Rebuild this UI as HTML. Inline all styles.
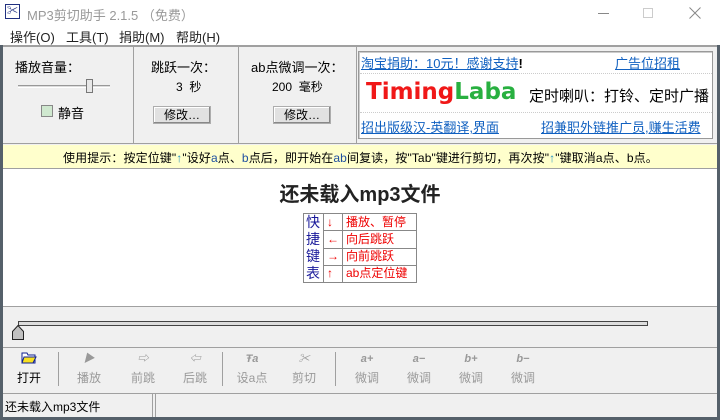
<!DOCTYPE html>
<html><head><meta charset="utf-8"><style>
*{margin:0;padding:0;box-sizing:border-box}
body{width:720px;height:420px;overflow:hidden;background:#f0f0f0;position:relative;font-family:"Liberation Sans","Noto Sans CJK SC",sans-serif;font-size:12px;color:#000}
.a{position:absolute}
.btn{position:absolute;width:58px;height:18px;background:#e1e1e1;border:1px solid #adadad;box-shadow:inset -1px -1px 0 #888,inset 1px 1px 0 #fff;text-align:center;line-height:16px;font-size:12px}
.lnk{color:#1060c0;text-decoration:underline}
.tb{position:absolute;top:352px;width:50px;margin-left:-25px;text-align:center;color:#9a9a9a;font-size:12px}
.tb .i{height:17px;font-size:11px;font-style:italic;font-weight:bold;color:#999;line-height:15px}
.vs{position:absolute;top:352px;width:1px;height:34px;background:#a0a0a0}
td{border:1px solid #888;padding:0 3px;height:17px;color:#e00;font-size:12px;line-height:15px}
.m{position:absolute;top:27px;font-size:13px;color:#222}
</style></head><body>
<div class="a" style="left:0;top:0;width:720px;height:45px;background:#fff"></div>
<div class="a" style="left:5px;top:4px;width:15px;height:15px;border:1px solid #203080;font-size:11px;line-height:13px;text-align:center;color:#203080">✂</div>
<div class="a" style="left:27px;top:5px;color:#999;font-size:13px">MP3剪切助手 2.1.5 （免费）</div>
<div class="a" style="left:598px;top:13px;width:11px;height:1px;background:#888"></div>
<div class="a" style="left:643px;top:8px;width:10px;height:10px;border:1px solid #ccc"></div>
<svg class="a" style="left:689px;top:7px" width="12" height="12"><path d="M0.5 0.5L11.5 11.5M11.5 0.5L0.5 11.5" stroke="#888" stroke-width="1"/></svg>
<div class="m" style="left:10px">操作(O)</div>
<div class="m" style="left:66px">工具(T)</div>
<div class="m" style="left:119px">捐助(M)</div>
<div class="m" style="left:176px">帮助(H)</div>
<div class="a" style="left:0;top:45px;width:3px;height:375px;background:#55606a"></div>
<div class="a" style="left:717px;top:45px;width:3px;height:375px;background:#55606a"></div>
<div class="a" style="left:0;top:417px;width:720px;height:3px;background:#55606a"></div>
<div class="a" style="left:3px;top:45px;width:714px;height:2px;background:#a0a0a0"></div>
<div class="a" style="left:133px;top:47px;width:1px;height:96px;background:#a0a0a0"></div>
<div class="a" style="left:238px;top:47px;width:1px;height:96px;background:#a0a0a0"></div>
<div class="a" style="left:356px;top:47px;width:1px;height:96px;background:#a0a0a0"></div>
<div class="a" style="left:15px;top:57px;font-size:13px">播放音量：</div>
<div class="a" style="left:18px;top:85px;width:92px;height:3px;border-top:1px solid #999;border-bottom:1px solid #fff;background:#ddd"></div>
<div class="a" style="left:86px;top:79px;width:7px;height:14px;background:#e8e8e8;border:1px solid #777"></div>
<div class="a" style="left:41px;top:105px;width:12px;height:12px;border:1px solid #888;background:#cfe8cf"></div>
<div class="a" style="left:58px;top:103px;font-size:13px">静音</div>
<div class="a" style="left:151px;top:57px;font-size:13px">跳跃一次：</div>
<div class="a" style="left:176px;top:78px;font-size:12px">3&nbsp;&nbsp;秒</div>
<div class="btn" style="left:153px;top:106px">修改…</div>
<div class="a" style="left:251px;top:57px;font-size:13px">ab点微调一次：</div>
<div class="a" style="left:272px;top:78px;font-size:12px">200&nbsp;&nbsp;毫秒</div>
<div class="btn" style="left:273px;top:106px">修改…</div>
<div class="a" style="left:358px;top:51px;width:355px;height:88px;background:#fff;border:1px solid #999;box-shadow:inset 1px 1px 0 #ccc"></div>
<div class="a" style="left:361px;top:53px;font-size:13px"><span class="lnk">淘宝捐助：10元！感谢支持</span><b>!</b></div>
<div class="a lnk" style="left:615px;top:53px;font-size:13px">广告位招租</div>
<div class="a" style="left:360px;top:73px;width:352px;border-top:1px dotted #ccc"></div>
<div class="a" style="left:366px;top:79px;font-size:23px;font-weight:bold;font-family:'DejaVu Sans',sans-serif"><span style="color:#f01818">Timing</span><span style="color:#28b040">Laba</span></div>
<div class="a" style="left:529px;top:85px;font-size:15px;white-space:nowrap">定时喇叭：打铃、定时广播</div>
<div class="a" style="left:360px;top:112px;width:352px;border-top:1px dotted #ccc"></div>
<div class="a lnk" style="left:361px;top:117px;font-size:13px">招出版级汉-英翻译,界面</div>
<div class="a lnk" style="left:541px;top:117px;font-size:13px">招兼职外链推广员,赚生活费</div>
<div class="a" style="left:3px;top:143px;width:714px;height:1px;background:#a0a0a0"></div>
<div class="a" style="left:3px;top:145px;width:714px;height:23px;background:#ffffcc"></div>
<div class="a" style="left:63px;top:149px;font-size:12px;white-space:nowrap;letter-spacing:0.1px">使用提示：按定位键"<span style="color:#2090c0">↑</span>"设好<span style="color:#2050a0">a</span>点、<span style="color:#2050a0">b</span>点后，即开始在<span style="color:#2050a0">ab</span>间复读，按"Tab"键进行剪切，再次按"<span style="color:#2090c0">↑</span>"键取消a点、b点。</div>
<div class="a" style="left:3px;top:168px;width:714px;height:139px;background:#fff;border-top:1px solid #a0a0a0;border-bottom:1px solid #a0a0a0"></div>
<div class="a" style="left:0;width:720px;top:178px;text-align:center;font-size:20px;font-weight:bold;color:#222">还未载入mp3文件</div>
<table class="a" style="left:303px;top:213px;border-collapse:collapse;border:1px solid #888">
<tr><td rowspan="4" style="color:#1a1a9a;font-size:14px;line-height:17px;width:20px;padding:0 2px">快<br>捷<br>键<br>表</td><td>↓</td><td style="width:74px">播放、暂停</td></tr>
<tr><td>←</td><td>向后跳跃</td></tr>
<tr><td>→</td><td>向前跳跃</td></tr>
<tr><td>↑</td><td>ab点定位键</td></tr>
</table>
<div class="a" style="left:18px;top:321px;width:630px;height:5px;border:1px solid #444;background:#ddd"></div>
<svg class="a" style="left:12px;top:324px" width="14" height="16"><path d="M0.5 15.5V7.5L6 1.5L11.5 7.5V15.5Z" fill="#c0c0c0" stroke="#222"/></svg>
<div class="a" style="left:3px;top:347px;width:714px;height:1px;background:#a0a0a0"></div>
<div class="tb" style="left:29px;color:#000"><div class="i"><svg width="16" height="12"><path d="M1 1h5l1 2h7v8H1z" fill="#fff" stroke="#102090"/><path d="M3 5h12l-3 6H1z" fill="#f8e020" stroke="#102090"/></svg></div>打开</div>
<div class="vs" style="left:58px"></div>
<div class="tb" style="left:89px"><div class="i">▶</div>播放</div>
<div class="tb" style="left:143px"><div class="i">⇨</div>前跳</div>
<div class="tb" style="left:195px"><div class="i">⇦</div>后跳</div>
<div class="vs" style="left:222px"></div>
<div class="tb" style="left:252px"><div class="i">Ŧa</div>设a点</div>
<div class="tb" style="left:304px"><div class="i">✂</div>剪切</div>
<div class="vs" style="left:335px"></div>
<div class="tb" style="left:367px"><div class="i">a+</div>微调</div>
<div class="tb" style="left:419px"><div class="i">a−</div>微调</div>
<div class="tb" style="left:471px"><div class="i">b+</div>微调</div>
<div class="tb" style="left:523px"><div class="i">b−</div>微调</div>
<div class="a" style="left:3px;top:393px;width:714px;height:1px;background:#a0a0a0"></div>
<div class="a" style="left:152px;top:394px;width:1px;height:23px;background:#a0a0a0"></div>
<div class="a" style="left:155px;top:394px;width:1px;height:23px;background:#a0a0a0"></div>
<div class="a" style="left:5px;top:398px;font-size:12px">还未载入mp3文件</div>
</body></html>
